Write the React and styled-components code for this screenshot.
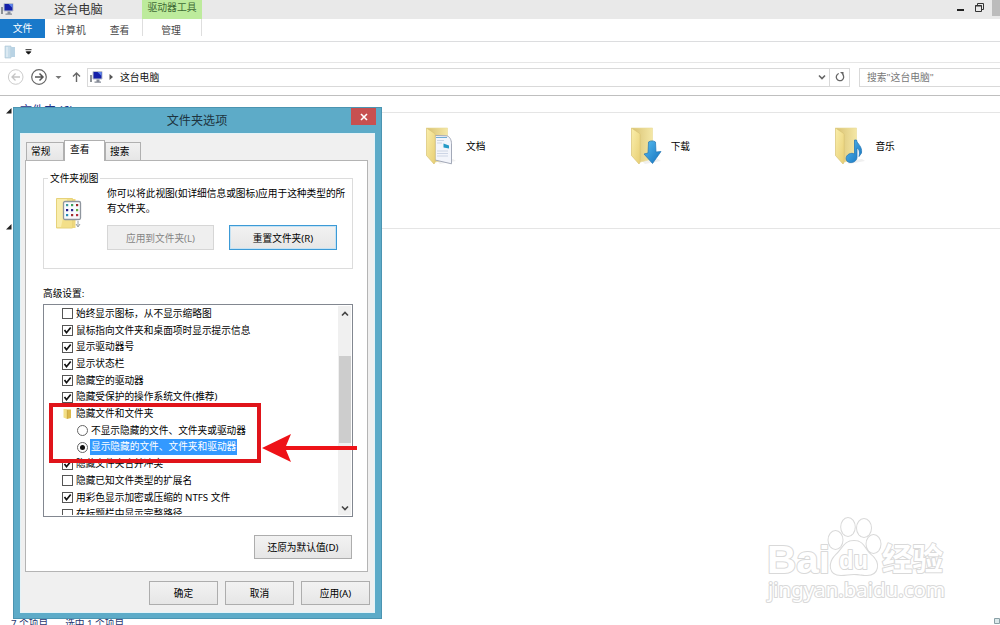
import styled, { createGlobalStyle, css } from 'styled-components'

const GlobalStyle = createGlobalStyle`
  * {
    box-sizing: border-box;
  }

  body {
    margin: 0;
    overflow: hidden;
    background: #fff;
    font-family: 'Noto Sans', 'Noto Sans CJK SC', sans-serif;
    font-size: 9.7px;
    color: #000;
  }
`

const Window = styled.div`
  position: relative;
  display: flex;
  flex-direction: column;
  width: 1000px;
  height: 625px;
  overflow: hidden;
  white-space: nowrap;
`

/* ---------- explorer ---------- */

const TitleBar = styled.header`
  display: flex;
  height: 19px;
  background: #e9e9e9;
`

const TitleIcon = styled.div`
  width: 54px;
  padding-top: 2px;
`

const WindowTitle = styled.div`
  width: 88px;
  font-size: 12.2px;
  line-height: 19px;
  color: #333;
`

const ToolsTab = styled.div`
  width: 60px;
  background: #bdeb9c;
  font-size: 9.8px;
  line-height: 16px;
  text-align: center;
  color: #3f6b35;
`

const WindowControls = styled.div`
  display: flex;
  margin-left: auto;
`

const CloseStub = styled.div`
  width: 8px;
  height: 16px;
  margin-left: 5px;
  background: #bcbcbc;
`

const Ribbon = styled.nav`
  display: flex;
  height: 23px;
  border-bottom: 1px solid #dcdddf;
  font-size: 9.8px;
  line-height: 23px;
  color: #444;
`

const FileTab = styled.div`
  width: 45px;
  height: 19px;
  background: #1979ca;
  line-height: 20px;
  text-align: center;
  color: #fff;
`

const RibbonTab = styled.div`
  width: ${(props) => props.$width}px;
  height: 17px;
  text-align: center;

  ${(props) =>
    props.$context &&
    css`
      width: 60px;
      padding-right: 2px;
      border-left: 1px solid #dedede;
      border-right: 1px solid #dedede;
    `}
`

const QuickAccess = styled.div`
  display: flex;
  align-items: center;
  gap: 9px;
  height: 21px;
  padding-left: 4px;
  border-bottom: 1px solid #e6e6e6;
`

const AddressBar = styled.div`
  display: flex;
  align-items: center;
  height: 33px;
  padding: 0 0 4px 7px;
  border-bottom: 1px solid #bfbfbf;
`

const NavIcons = styled.div`
  display: flex;
  flex: none;
  width: 80px;
`

const Field = styled.div`
  display: flex;
  flex: none;
  align-items: center;
  width: ${(props) => props.$width}px;
  height: 19px;
  margin-right: 9px;
  padding-left: 1px;
  border: 1px solid #d9d9d9;
  font-size: 9.8px;
  color: ${(props) => props.$color || '#111'};
`

const FieldText = styled.span`
  padding-left: 6px;
  line-height: 17px;
`

const Refresh = styled.div`
  display: flex;
  align-items: center;
  justify-content: center;
  width: 20px;
  height: 17px;
  border-left: 1px solid #d9d9d9;
`

const DropArrow = styled.div`
  display: flex;
  margin: 0 3px 0 auto;
`

const Content = styled.main`
  display: flex;
  flex-direction: column;
  height: 529px;
  padding-top: 7px;
`

const GroupHeader = styled.div`
  display: flex;
  align-items: center;
  gap: 8px;
  height: 19px;
  padding-left: 6px;
  color: #1e3287;
`

const GroupName = styled.span`
  padding-bottom: 3px;
  font-size: 12px;
  line-height: 16px;
`

const GroupLine = styled.div`
  flex: 1;
  height: 1px;
  background: #e5e5e5;
`

const FolderGrid = styled.div`
  display: grid;
  grid-template-columns: repeat(3, 204.7px);
  height: 97px;
  padding: 4px 0 0 425px;
`

const Folder = styled.div`
  display: flex;
  align-items: center;
  gap: 8px;
  height: 39px;
`

const StatusBar = styled.footer`
  display: flex;
  gap: 17px;
  margin-top: auto;
  height: 8px;
  padding-left: 11px;
  line-height: 14px;
  color: #27366f;
`

/* ---------- dialog ---------- */

const Dialog = styled.section`
  position: absolute;
  left: 13px;
  top: 107px;
  width: 369px;
  height: 512px;
  padding: 0 6px;
  background: #5dabc8;
  border: 1px solid #4b94b1;
`

const DialogTitle = styled.div`
  display: flex;
  justify-content: flex-end;
  height: 25px;
  margin-right: -1px;
`

const DialogName = styled.h1`
  flex: 1;
  margin: 0;
  padding-left: 23px;
  font-size: 12.1px;
  font-weight: 400;
  line-height: 25px;
  text-align: center;
  color: #1d3440;
`

const DialogClose = styled.button`
  display: flex;
  align-items: center;
  justify-content: center;
  width: 25px;
  height: 17px;
  padding: 0;
  border: 0;
  background: #c75050;
`

const DialogBody = styled.div`
  height: 480px;
  padding: 6px 4px 0;
  background: #f0f0f0;
  border: 1px solid #e4f3f8;
`

const Tabs = styled.div`
  display: flex;
  align-items: flex-end;
  height: 20px;
  padding-left: 1px;
`

const Tab = styled.div`
  width: ${(props) => props.$width}px;
  height: ${(props) => (props.$active ? 21 : 18)}px;
  margin-bottom: ${(props) => (props.$active ? -1 : 0)}px;
  padding-left: ${(props) => (props.$active ? 5 : 4)}px;
  background: ${(props) => (props.$active ? '#fff' : 'linear-gradient(#f1f1f1, #e6e6e6)')};
  border: 1px solid #b0b0b0;
  border-bottom: 0;
  line-height: ${(props) => (props.$active ? 18 : 18)}px;
`

const Panel = styled.div`
  height: 412px;
  margin-right: 2px;
  padding: 17px 15px 0 17px;
  background: #fff;
  border: 1px solid #b4b4b4;
`

const GroupBox = styled.fieldset`
  display: flex;
  width: 310px;
  height: 97px;
  margin: -6px 0 0;
  padding: 0 0 0 12px;
  border: 1px solid #dcdcdc;
`

const Legend = styled.legend`
  margin-left: -8px;
  padding: 0 2px;
  line-height: 13px;
`

const GroupIcon = styled.div`
  width: 51px;
  padding-top: 12px;
`

const GroupText = styled.p`
  margin: 2px 0 9px;
  line-height: 14.5px;
`

const ButtonRow = styled.div`
  display: flex;
  justify-content: ${(props) => (props.$end ? 'flex-end' : 'flex-start')};
  gap: ${(props) => props.$gap || 0}px;
  margin-top: ${(props) => props.$top || 0}px;
`

const Button = styled.button`
  width: ${(props) => props.$width}px;
  height: ${(props) => props.$height || 24}px;
  padding: 0;
  background: linear-gradient(#f2f2f2, #e6e6e6);
  border: 1px solid #adadad;
  font: inherit;
  color: #000;

  ${(props) =>
    props.$focus &&
    css`
      border-color: #3c9ad6;
      box-shadow: inset 0 0 0 1px #c5e2f3;
    `}

  &:disabled {
    background: #efefef;
    border-color: #d6d6d6;
    color: #858585;
  }
`

const ListLabel = styled.div`
  height: 35px;
  padding-top: 18px;
  line-height: 14px;
`

const SettingsList = styled.div`
  display: flex;
  width: 310px;
  height: 213px;
  border: 1px solid #828790;
  overflow: hidden;
`

const Rows = styled.div`
  flex: 1;
  height: 210px;
  padding-top: 0.6px;
  overflow: hidden;
`

const Row = styled.div`
  display: flex;
  align-items: center;
  height: 16.7px;
  padding-left: ${(props) => (props.$nested ? 33 : 18)}px;
`

const RowLabel = styled.span`
  margin-left: 2px;
  padding: 0 1px;
  line-height: 16px;

  ${(props) =>
    props.$selected &&
    css`
      background: #3399ff;
      color: #fff;
    `}
`

const Checkbox = styled.span`
  display: flex;
  width: 11px;
  height: 11px;
  border: 1px solid #555;
  background: #fff;
`

const Radio = styled.span`
  display: flex;
  align-items: center;
  justify-content: center;
  width: 11px;
  height: 11px;
  border: 1px solid #666;
  border-radius: 50%;

  &::after {
    content: '';
    width: 5px;
    height: 5px;
    border-radius: 50%;
    background: ${(props) => (props.$on ? '#111' : 'transparent')};
  }
`

const Scrollbar = styled.div`
  display: flex;
  flex-direction: column;
  justify-content: space-between;
  align-items: center;
  width: 13px;
  height: 209px;
  margin: 1px 1px 0 0;
  padding: 5px 0 4px;
  background: #f0f0f0;
`

const Thumb = styled.div`
  width: 12px;
  height: 87px;
  margin: -24px 0 0;
  background: #cdcdcd;
`

/* ---------- overlays ---------- */

const Highlight = styled.div`
  position: absolute;
  left: 49px;
  top: 403px;
  width: 212px;
  height: 60px;
  border: 4px solid #e0141a;
`

const ArrowMark = styled.svg`
  position: absolute;
  left: 262px;
  top: 433px;
`

const Watermark = styled.svg`
  position: absolute;
  left: 760px;
  top: 510px;
`

const CornerIcon = styled.svg`
  position: absolute;
  left: 994px;
  top: 617px;
`

function ComputerIcon() {
  return (
    <svg width="14" height="14" viewBox="0 0 14 14">
      <path d="M1 5h2v7H1z" fill="#8c9196" />
      <path d="M4 1.500h9v7.500H4z" fill="#1420a8" stroke="#b9c0cc" />
      <path d="M8.500 2h4v4z" fill="#5c83ec" />
      <path d="M7.500 9.500h3v2h1.500v1.300H5.500V11.500h2z" fill="#868c98" />
    </svg>
  )
}

function FolderIcon({ kind }) {
  return (
    <svg width="33" height="40" viewBox="0 0 33 40">
      <defs>
        <linearGradient id={`front-${kind}`} x2="1" y2="1">
          <stop offset="0" stopColor="#faeeab" />
          <stop offset="1" stopColor="#e8cf74" />
        </linearGradient>
        <linearGradient id={`back-${kind}`} x2="1" y2="0">
          <stop offset="0" stopColor="#d9c273" />
          <stop offset="1" stopColor="#f4e7a6" />
        </linearGradient>
        <linearGradient id={`blue-${kind}`} x2="1" y2="1">
          <stop offset="0" stopColor="#58bdf0" />
          <stop offset="1" stopColor="#1271bf" />
        </linearGradient>
      </defs>
      <path d="M12 35l16-2 3 2-16 3z" fill="#f0f0f0" />
      <path d="M2 2h20.500v31l-12 3z" fill={`url(#back-${kind})`} stroke="#eadb97" strokeWidth=".6" />
      {kind === 'doc' && (
        <>
          <path d="M10 9.500l11 .3c3.500 0 5.500 4 5.500 8v20L10 34z" fill="#f3f5fb" stroke="#a3a9b8" />
          <path d="M12 14.500h7M12 17h5M12 25h11M12 27.500h11M12 30h11" stroke="#c3cde0" strokeWidth=".8" />
          <path d="M11 11.500h11" stroke="#6fabd4" />
          <path d="M18.500 17.500l5.500 2v3l-5.500-1z" fill="#269ac6" />
        </>
      )}
      <path d="M1.500 2l7.500 5c1 .7 1.200 1.200 1.200 2v27L9 38l-7.500-8.500z" fill={`url(#front-${kind})`} stroke="#d9c374" strokeWidth=".7" />
      {kind === 'download' && (
        <path
          d="M18.500 16c2-1.500 5-1.500 7 0L26 26l5-.5L22.500 37.500 14 28l4-1z"
          fill={`url(#blue-${kind})`}
          stroke="#2275b3"
          strokeWidth=".7"
        />
      )}
      {kind === 'music' && (
        <path
          d="M20.500 14h2c.5 4 6 6 5 13l-2.500 3.500c1-5 0-7.500-2-8.500v9c0 4-4 6-7 5.500-5-.5-5-6.500-1-8.500 2-.9 4-.9 5.500 0z"
          fill={`url(#blue-${kind})`}
          stroke="#2779b6"
          strokeWidth=".8"
        />
      )}
    </svg>
  )
}

function ViewFolderIcon() {
  const dots = ['#3c9c9c', '#3ca060', '#9c2626', '#251888', '#2b2b8e', '#63b040', '#268cb5', '#a03030', '#b52d3d']
  return (
    <svg width="27" height="33" viewBox="0 0 27 33">
      <path d="M.5 1.500h16V31H.5z" fill="#f3df88" stroke="#e6d27a" />
      <path d="M1 2h10L5 30H1z" fill="#f9edac" />
      <path d="M16.500 2h3v29h-3z" fill="#eed77d" />
      <rect x="7.500" y="4.500" width="17" height="18" rx="1.500" fill="#f8fafc" stroke="#8f969e" strokeWidth="1.300" />
      {dots.map((color, i) => (
        <rect key={i} x={10 + (i % 3) * 5} y={7 + Math.floor(i / 3) * 5} width="2.200" height="2.200" fill={color} />
      ))}
      <path d="M22 24v5M20 27l2 3 2-3" fill="none" stroke="#99a0a4" />
    </svg>
  )
}

function SmallFolderIcon() {
  return (
    <svg width="11" height="12" viewBox="0 0 11 12">
      <path d="M1.500 1H5v10l-3.500-1.500z" fill="#f3df86" />
      <path d="M5 1.500h4v8.500l-4 1z" fill="#dcb94b" />
      <path d="M5.300 2v8.500" stroke="#c5a244" strokeWidth=".7" />
    </svg>
  )
}

function Chevron({ up, color = '#444' }) {
  return (
    <svg width="8" height="6" viewBox="0 0 8 6">
      <path d={up ? 'M1 4.500l3-3 3 3' : 'M1 1.500l3 3 3-3'} fill="none" stroke={color} strokeWidth="1.600" />
    </svg>
  )
}

function GroupArrow() {
  return (
    <svg width="6" height="10" viewBox="0 0 6 10">
      <path d="M5.500 0v5.500H0z" fill="#222" />
    </svg>
  )
}

const settings = [
  { type: 'check', label: '始终显示图标，从不显示缩略图' },
  { type: 'check', on: true, label: '鼠标指向文件夹和桌面项时显示提示信息' },
  { type: 'check', on: true, label: '显示驱动器号' },
  { type: 'check', on: true, label: '显示状态栏' },
  { type: 'check', on: true, label: '隐藏空的驱动器' },
  { type: 'check', on: true, label: '隐藏受保护的操作系统文件(推荐)' },
  { type: 'folder', label: '隐藏文件和文件夹' },
  { type: 'radio', label: '不显示隐藏的文件、文件夹或驱动器' },
  { type: 'radio', on: true, label: '显示隐藏的文件、文件夹和驱动器' },
  { type: 'check', on: true, label: '隐藏文件夹合并冲突' },
  { type: 'check', label: '隐藏已知文件类型的扩展名' },
  { type: 'check', on: true, label: '用彩色显示加密或压缩的 NTFS 文件' },
  { type: 'check', label: '在标题栏中显示完整路径' },
]

function SettingRow({ setting }) {
  const { type, on, label } = setting

  return (
    <Row $nested={type === 'radio'}>
      {type === 'check' && (
        <Checkbox>
          {on && (
            <svg width="9" height="9" viewBox="0 0 9 9">
              <path d="M1.500 4l2 2.700L7.700 1.500" fill="none" stroke="#111" strokeWidth="1.700" />
            </svg>
          )}
        </Checkbox>
      )}
      {type === 'folder' && <SmallFolderIcon />}
      {type === 'radio' && <Radio $on={on} />}
      <RowLabel $selected={type === 'radio' && on}>{label}</RowLabel>
    </Row>
  )
}

function Explorer() {
  return (
    <>
      <TitleBar>
        <TitleIcon>
          <ComputerIcon />
        </TitleIcon>
        <WindowTitle>这台电脑</WindowTitle>
        <ToolsTab>驱动器工具</ToolsTab>
        <WindowControls>
          <svg width="32" height="16" viewBox="0 0 32 16">
            <path d="M2 10h7" stroke="#222" strokeWidth="2" />
            <path d="M22.500 5V3.500h6v6h-1.500M20.500 5.500h6v6h-6z" fill="none" stroke="#333" />
            <path d="M20 6h7" stroke="#333" />
          </svg>
          <CloseStub />
        </WindowControls>
      </TitleBar>
      <Ribbon>
        <FileTab>文件</FileTab>
        <RibbonTab $width={52}>计算机</RibbonTab>
        <RibbonTab $width={45}>查看</RibbonTab>
        <RibbonTab $context>管理</RibbonTab>
      </Ribbon>
      <QuickAccess>
        <svg width="12" height="14" viewBox="0 0 12 14">
          <path d="M1 1h6v12H1z" fill="#c8ddea" stroke="#a9c3d4" strokeWidth=".6" />
          <path d="M7 2h4v10H7z" fill="#b9d3e4" />
          <path d="M3 2v10" stroke="#edf5fa" />
        </svg>
        <svg width="7" height="6" viewBox="0 0 7 6">
          <path d="M.5 .7h6M1.200 2.800h4.600L3.500 5.200z" fill="#111" stroke="#111" strokeWidth=".9" />
        </svg>
      </QuickAccess>
      <AddressBar>
        <NavIcons>
          <svg width="80" height="18" viewBox="0 0 80 18">
            <g fill="none">
              <circle cx="8.700" cy="9" r="7.300" stroke="#ccc" />
              <path d="M13 9H5M8.500 5.500L5 9l3.500 3.500" stroke="#c4c4c4" strokeWidth="1.300" />
              <circle cx="32" cy="9" r="7.300" stroke="#666" strokeWidth="1.200" />
              <path d="M28 9h8M32.500 5.500L36 9l-3.500 3.500" stroke="#555" strokeWidth="1.500" />
              <path d="M69.500 14V5M66 8.500L69.500 5 73 8.500" stroke="#666" strokeWidth="1.400" />
            </g>
            <path d="M48.500 8h6l-3 3z" fill="#777" />
          </svg>
        </NavIcons>
        <Field $width={763}>
          <ComputerIcon />
          <svg width="11" height="8" viewBox="0 0 11 8">
            <path d="M6.500 1l3.500 3-3.500 3z" fill="#555" />
          </svg>
          <FieldText>这台电脑</FieldText>
          <DropArrow>
            <Chevron color="#666" />
          </DropArrow>
          <Refresh>
            <svg width="10" height="10" viewBox="0 0 10 10">
              <path d="M6.200 1.500A3.700 3.700 0 1 1 2.500 2.300" fill="none" stroke="#666" strokeWidth="1.300" transform="matrix(-1 0 0 1 10 0)" />
              <path d="M5 0h3.500v3.500z" fill="#666" />
            </svg>
          </Refresh>
        </Field>
        <Field $width={150} $color="#777">
          <FieldText>搜索"这台电脑"</FieldText>
        </Field>
      </AddressBar>
      <Content>
        <GroupHeader>
          <GroupArrow />
          <GroupName>文件夹 (6)</GroupName>
          <GroupLine />
        </GroupHeader>
        <FolderGrid>
          <Folder>
            <FolderIcon kind="doc" />
            文档
          </Folder>
          <Folder>
            <FolderIcon kind="download" />
            下载
          </Folder>
          <Folder>
            <FolderIcon kind="music" />
            音乐
          </Folder>
        </FolderGrid>
        <GroupHeader>
          <GroupArrow />
          <GroupLine />
        </GroupHeader>
        <StatusBar>
          <span>7 个项目</span>
          <span>选中 1 个项目</span>
        </StatusBar>
      </Content>
    </>
  )
}

function FolderOptions() {
  return (
    <Dialog>
      <DialogTitle>
        <DialogName>文件夹选项</DialogName>
        <DialogClose>
          <svg width="8" height="8" viewBox="0 0 8 8">
            <path d="M1 1l6 6M7 1L1 7" stroke="#fff" strokeWidth="1.600" />
          </svg>
        </DialogClose>
      </DialogTitle>
      <DialogBody>
        <Tabs>
          <Tab $width={38}>常规</Tab>
          <Tab $width={41} $active>
            查看
          </Tab>
          <Tab $width={36}>搜索</Tab>
        </Tabs>
        <Panel>
          <GroupBox>
            <Legend>文件夹视图</Legend>
            <GroupIcon>
              <ViewFolderIcon />
            </GroupIcon>
            <div>
              <GroupText>
                你可以将此视图(如详细信息或图标)应用于这种类型的所
                <br />
                有文件夹。
              </GroupText>
              <ButtonRow $gap={15}>
                <Button $width={107} $height={25} disabled>
                  应用到文件夹(L)
                </Button>
                <Button $width={108} $height={25} $focus>
                  重置文件夹(R)
                </Button>
              </ButtonRow>
            </div>
          </GroupBox>
          <ListLabel>高级设置:</ListLabel>
          <SettingsList>
            <Rows>
              {settings.map((setting) => (
                <SettingRow key={setting.label} setting={setting} />
              ))}
            </Rows>
            <Scrollbar>
              <Chevron up />
              <Thumb />
              <Chevron />
            </Scrollbar>
          </SettingsList>
          <ButtonRow $end $top={18}>
            <Button $width={98}>还原为默认值(D)</Button>
          </ButtonRow>
        </Panel>
        <ButtonRow $end $gap={7} $top={9}>
          <Button $width={69}>确定</Button>
          <Button $width={69}>取消</Button>
          <Button $width={69}>应用(A)</Button>
        </ButtonRow>
      </DialogBody>
    </Dialog>
  )
}

function BaiduMark() {
  return (
    <Watermark width="200" height="100" viewBox="0 0 200 100">
      <g
        fill="#fff"
        stroke="#d9d9d9"
        strokeWidth="2"
        strokeLinejoin="round"
        paintOrder="stroke"
        fontFamily="'Liberation Sans', 'Noto Sans CJK SC', sans-serif"
      >
        <text x="7" y="63" fontSize="39" fontWeight="700" textLength="63" lengthAdjust="spacingAndGlyphs">
          Bai
        </text>
        <ellipse cx="75.500" cy="30" rx="7" ry="9" />
        <ellipse cx="88" cy="17" rx="6.800" ry="9" />
        <ellipse cx="104" cy="18" rx="7" ry="9" />
        <ellipse cx="113.500" cy="34" rx="7" ry="9" />
        <path d="M94 31c10 0 10 8 17 14 10 8 7 20-4 20-6 0-8-1-13-1s-8 1-13 1c-12 0-13-12-5-20 7-6 8-14 18-14z" />
        <text x="79" y="58.500" fontSize="25" fontWeight="700" textLength="29" lengthAdjust="spacingAndGlyphs">
          du
        </text>
        <text x="122" y="60" fontSize="31" fontWeight="700" textLength="61" lengthAdjust="spacingAndGlyphs">
          经验
        </text>
        <text x="8" y="86.500" fontSize="19" fontFamily="'Noto Sans', sans-serif" textLength="177" lengthAdjust="spacingAndGlyphs">
          jingyan.baidu.com
        </text>
      </g>
    </Watermark>
  )
}

function App() {
  return (
    <>
      <GlobalStyle />
      <Window>
        <Explorer />
        <FolderOptions />
        <Highlight />
        <ArrowMark width="96" height="30" viewBox="0 0 96 30">
          <path d="M0 15L29 1l-5 12h71v4H24l5 12z" fill="#ee1217" />
        </ArrowMark>
        <BaiduMark />
        <CornerIcon width="6" height="8" viewBox="0 0 6 8">
          <path d="M.5 1.500h5v5h-5z" fill="#dbe8ea" stroke="#8aa0a6" />
        </CornerIcon>
      </Window>
    </>
  )
}

export default App
